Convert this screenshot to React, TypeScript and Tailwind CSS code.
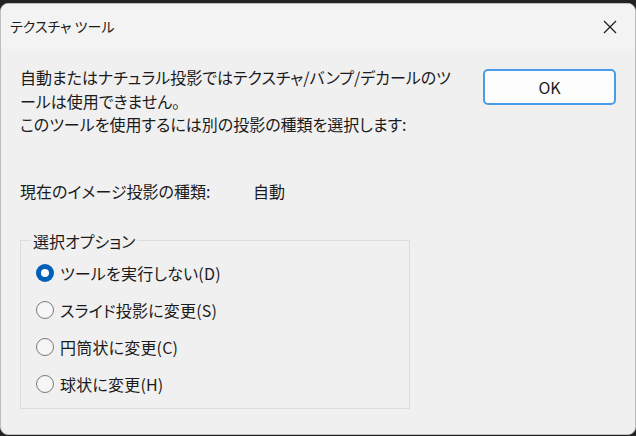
const FONT = "font-['Noto_Sans_CJK_JP','Noto_Sans',sans-serif] [font-feature-settings:'palt']";

const OPTIONS = [
  { label: 'ツールを実行しない(D)', checked: true },
  { label: 'スライド投影に変更(S)', checked: false },
  { label: '円筒状に変更(C)', checked: false },
  { label: '球状に変更(H)', checked: false },
];

function Radio({ checked }: { checked: boolean }) {
  if (checked) {
    return (
      <span className="flex h-[18px] w-[18px] shrink-0 items-center justify-center rounded-full bg-[#005fb8]">
        <span className="h-[8px] w-[8px] rounded-full bg-white" />
      </span>
    );
  }
  return <span className="h-[18px] w-[18px] shrink-0 rounded-full border border-[#7a7a7a] bg-[#f6f6f6]" />;
}

export default function App() {
  return (
    <div className={`h-[436px] w-[636px] bg-[#232323] pt-[3px] text-[#1b1b1b] ${FONT}`}>
      <div className="flex h-[432px] flex-col overflow-hidden rounded-[8px] border border-[#bdbdbd] bg-[#f0f0f0]">
        <div className="flex h-[45px] shrink-0 items-center justify-between bg-[#f3f3f3] pl-[9px] pr-[18px]">
          <span className="text-[14px]">テクスチャ ツール</span>
          <svg width="14" height="14" viewBox="0 0 14 14" aria-hidden="true">
            <path d="M1 1L13 13M13 1L1 13" stroke="#1b1b1b" strokeWidth="1.2" />
          </svg>
        </div>

        <div className="flex flex-col px-[19px] text-[16px]">
          <div className="flex justify-between">
            <p className="pt-[17px] leading-[23.5px]">
              自動またはナチュラル投影ではテクスチャ/バンプ/デカールのツ
              <br />
              ールは使用できません。
              <br />
              このツールを使用するには別の投影の種類を選択します:
            </p>
            <button className="mt-[20px] h-[36px] w-[133px] rounded-[5px] border-2 border-[#4c9be8] bg-[#fdfdfd] text-[16px]">
              OK
            </button>
          </div>

          <div className="mt-[42px] flex leading-[24px]">
            <span className="w-[233px]">現在のイメージ投影の種類:</span>
            <span>自動</span>
          </div>

          <fieldset className="mt-[26px] w-[390px] border border-[#dcdcdc] pb-[5px]">
            <legend className="ml-[10px] px-[2px] leading-[24px]">選択オプション</legend>
            <div className="flex flex-col pl-[15px] pt-[2px]">
              {OPTIONS.map((o) => (
                <label key={o.label} className="flex h-[37px] items-center gap-[6px] tracking-[0.2px]">
                  <Radio checked={o.checked} />
                  <span>{o.label}</span>
                </label>
              ))}
            </div>
          </fieldset>
        </div>
      </div>
    </div>
  );
}
